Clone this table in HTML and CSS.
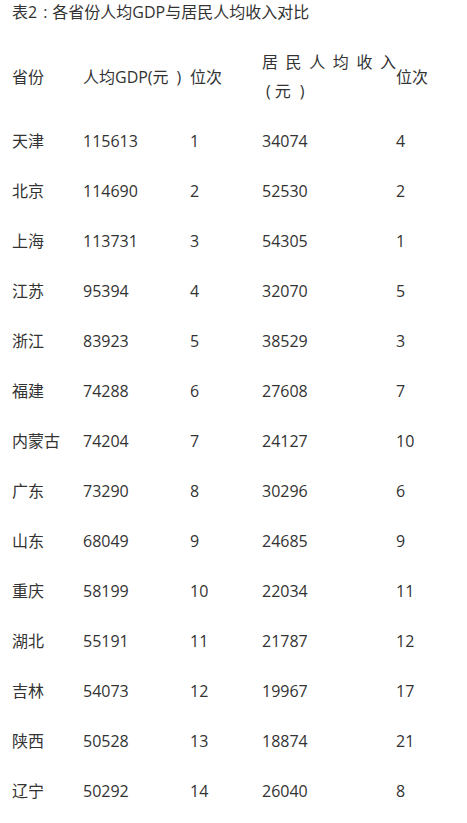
FILE: index.html
```html
<!DOCTYPE html>
<html lang="zh-CN">
<head>
<meta charset="utf-8">
<link rel="stylesheet" href="styles.css">
</head>
<body>
<p class="title">表2<span class="colon">:</span>各省份人均GDP与居民人均收入对比</p>
<table class="data">
  <tr class="head">
    <td>省份</td>
    <td>人均GDP(元<span class="rp">)</span></td>
    <td>位次</td>
    <td class="just">居民人均收入<span class="unit"><span class="lp2">(</span><span class="yuan">元</span><span class="rp2">)</span></span></td>
    <td>位次</td>
  </tr>
  <tr><td>天津</td><td>115613</td><td>1</td><td>34074</td><td>4</td></tr>
  <tr><td>北京</td><td>114690</td><td>2</td><td>52530</td><td>2</td></tr>
  <tr><td>上海</td><td>113731</td><td>3</td><td>54305</td><td>1</td></tr>
  <tr><td>江苏</td><td>95394</td><td>4</td><td>32070</td><td>5</td></tr>
  <tr><td>浙江</td><td>83923</td><td>5</td><td>38529</td><td>3</td></tr>
  <tr><td>福建</td><td>74288</td><td>6</td><td>27608</td><td>7</td></tr>
  <tr><td>内蒙古</td><td>74204</td><td>7</td><td>24127</td><td>10</td></tr>
  <tr><td>广东</td><td>73290</td><td>8</td><td>30296</td><td>6</td></tr>
  <tr><td>山东</td><td>68049</td><td>9</td><td>24685</td><td>9</td></tr>
  <tr><td>重庆</td><td>58199</td><td>10</td><td>22034</td><td>11</td></tr>
  <tr><td>湖北</td><td>55191</td><td>11</td><td>21787</td><td>12</td></tr>
  <tr><td>吉林</td><td>54073</td><td>12</td><td>19967</td><td>17</td></tr>
  <tr><td>陕西</td><td>50528</td><td>13</td><td>18874</td><td>21</td></tr>
  <tr><td>辽宁</td><td>50292</td><td>14</td><td>26040</td><td>8</td></tr>
</table>
</body>
</html>
```
FILE: styles.css
```css
html, body {
  margin: 0;
  padding: 0;
  background: #ffffff;
}
body {
  padding-left: 12px;
  color: #333333;
  font-family: "Open Sans", "Noto Sans CJK SC", sans-serif;
  font-size: 16px;
}
.title {
  margin: 0;
  height: 24px;
  line-height: 24px;
  margin-bottom: 13.5px;
  white-space: nowrap;
}
.colon {
  margin: 0 5px 0 6px;
}
.rp {
  margin: 0 3px 0 8px;
}
.unit {
  white-space: nowrap;
}
.lp2 {
  margin-left: 4px;
}
.yuan {
  margin-left: 4px;
}
.rp2 {
  margin-left: 9px;
}
.data {
  border-collapse: collapse;
  border-spacing: 0;
  table-layout: fixed;
}
.data td {
  padding: 10.5px 0;
  line-height: 29px;
  vertical-align: middle;
  white-space: nowrap;
  text-align: left;
}
.data td:nth-child(1) { width: 71px; }
.data td:nth-child(2) { width: 107px; }
.data td:nth-child(3) { width: 72px; }
.data td:nth-child(4) { width: 134px; }
.data td:nth-child(5) { width: 60px; }
.data td.just {
  white-space: normal;
  text-align: justify;
  text-justify: inter-character;
}
```
